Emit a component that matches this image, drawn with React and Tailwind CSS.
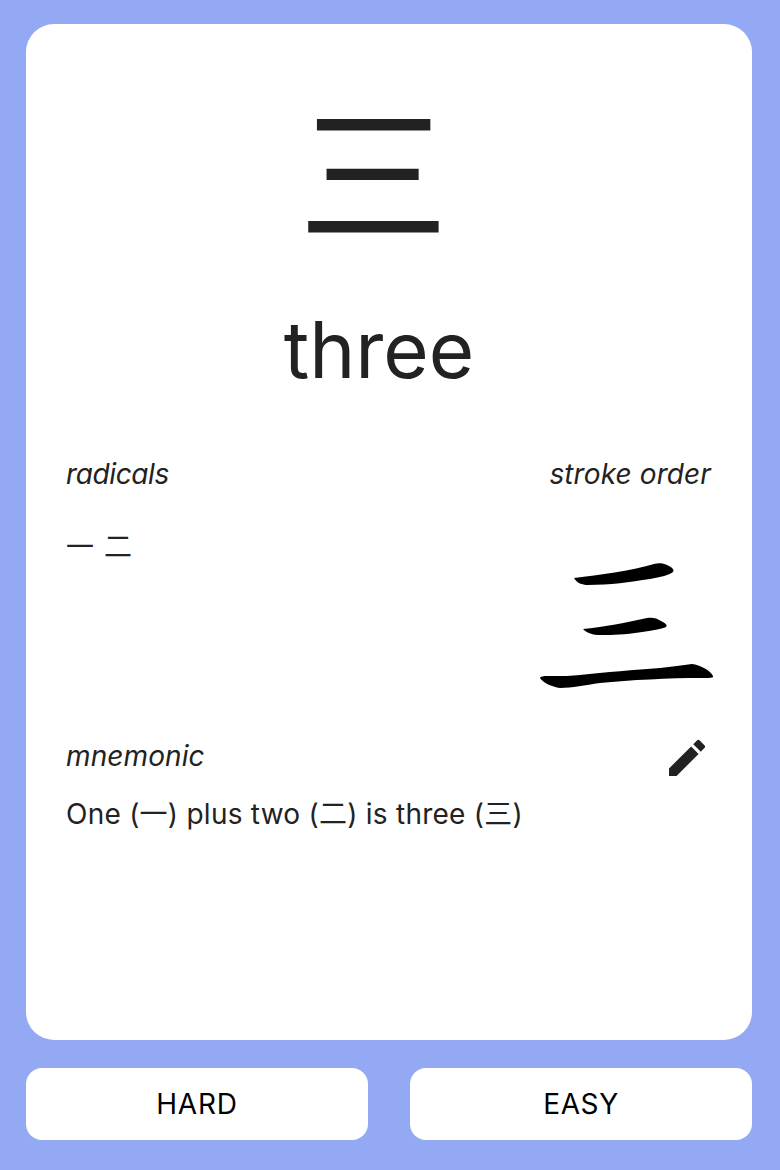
import React from 'react';
import { MdEdit } from 'react-icons/md';

const cjk = { fontFamily: 'Inter, "Noto Sans CJK JP", sans-serif' };

const StrokeOrder = () => (
  <svg viewBox="0 0 190 140" className="w-[190px] h-[140px] mt-[59px] -mr-[8px]" fill="#000">
    <path d="M44 28 C70 25 100 21 124 14 C128 13 133 13 137 15 C141 17 145 19 143 22 C140 25 130 27 120 29 C100 32 80 35 58 35 C52 35 47 33 44 28 Z" />
    <path d="M53 79 C72 77 95 73 117 68 C122 67 127 68 131 71 C135 73 138 75 136 77 C132 79 120 81 105 83 C90 85 78 85 70 85 C63 85 57 83 53 79 Z" />
    <path d="M10 128 C11 126 15 126 20 126 C32 126 42 126 50 125 C75 122 105 120 130 118 C142 117 152 115 162 114 C170 115 180 120 183 126 C184 128 180 128 170 128 C140 128 100 130 70 133 C55 135 42 138 30 138 C22 137 12 132 10 128 Z" />
  </svg>
);

export default function App() {
  return (
    <div className="w-[780px] h-[1170px] bg-[#93a9f3] pl-[26px] pr-[28px] pt-6 flex flex-col" style={cjk}>
      <div className="bg-white rounded-[28px] h-[1016px] px-10 text-[#222222] flex flex-col">
        <div className="text-center text-[150px] leading-[174px] mt-[66px] mr-[31px]">三</div>
        <div className="text-center text-[78px] leading-[100px] mt-[36px] mr-[20px]">three</div>
        <div className="flex justify-between mt-[57px]">
          <div>
            <div className="text-[28px] leading-[34px] italic tracking-[-0.4px]">radicals</div>
            <div className="text-[28px] leading-[40px] mt-[36px] tracking-[1px]">一 二</div>
          </div>
          <div className="flex flex-col items-end">
            <div className="text-[28px] leading-[34px] italic tracking-[0.1px] mr-[1px]">stroke order</div>
            <StrokeOrder />
          </div>
        </div>
        <div className="flex justify-between items-start mt-[43px]">
          <div className="text-[28px] leading-[34px] italic mt-[6px] tracking-[0.1px]">mnemonic</div>
          <MdEdit className="w-12 h-12 text-[#222222] mr-[1px] mt-[1px]" />
        </div>
        <div className="text-[28px] leading-[34px] tracking-[0.25px] mt-[15px]">One (一) plus two (二) is three (三)</div>
      </div>
      <div className="flex justify-between mt-7">
        <button className="w-[342px] h-[72px] bg-white rounded-2xl text-black text-[28px] tracking-[0.8px]">HARD</button>
        <button className="w-[342px] h-[72px] bg-white rounded-2xl text-black text-[28px] tracking-[0.6px]">EASY</button>
      </div>
    </div>
  );
}
